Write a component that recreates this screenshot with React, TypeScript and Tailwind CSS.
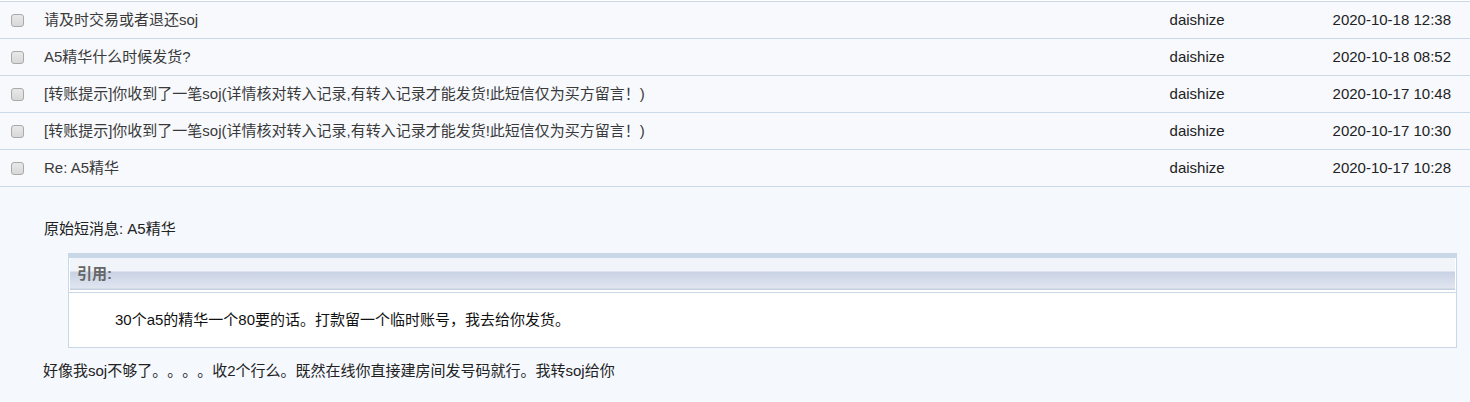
import React from "react"

interface Message {
  subject: string
  author: string
  time: string
}

const messages: Message[] = [
  { subject: "请及时交易或者退还soj", author: "daishize", time: "2020-10-18 12:38" },
  { subject: "A5精华什么时候发货?", author: "daishize", time: "2020-10-18 08:52" },
  {
    subject: "[转账提示]你收到了一笔soj(详情核对转入记录,有转入记录才能发货!此短信仅为买方留言！)",
    author: "daishize",
    time: "2020-10-17 10:48",
  },
  {
    subject: "[转账提示]你收到了一笔soj(详情核对转入记录,有转入记录才能发货!此短信仅为买方留言！)",
    author: "daishize",
    time: "2020-10-17 10:30",
  },
  { subject: "Re: A5精华", author: "daishize", time: "2020-10-17 10:28" },
]

function Checkbox() {
  return (
    <span className="block h-[13px] w-[13px] rounded-[3px] border border-[#a9a9a9] bg-[linear-gradient(#e8e8e8,#d8d8d8)]" />
  )
}

export default function App() {
  return (
    <div
      className="min-h-[402px] w-full bg-[#f5f8fd] text-[15px] text-[#222] [text-spacing-trim:space-all]"
      style={{ fontFamily: '"Liberation Sans", Arial, "Noto Sans CJK SC", sans-serif' }}
    >
      {/* Message list */}
      <div className="mt-px border-t border-[#cad9ea]">
        {messages.map((m, i) => (
          <div key={i} className="flex h-[37px] items-center border-b border-[#cad9ea] bg-[#f7f9fd]">
            <div className="w-[44px] pl-[11px]">
              <Checkbox />
            </div>
            <div className="flex-1 truncate text-[#3a3a3a]">{m.subject}</div>
            <div className="w-[163px]">{m.author}</div>
            <div className="pr-[19px] text-right">{m.time}</div>
          </div>
        ))}
      </div>

      {/* Opened message */}
      <div className="pl-[44px] pr-[13px] pt-[32px] pb-[20px] leading-[20px]">
        <div>原始短消息: A5精华</div>

        <div className="ml-6 mt-[14px] border border-t-[5px] border-[#c9d8e7] bg-white">
          <div className="mx-px flex h-[32px] items-center bg-[linear-gradient(#f1f4f9_0,#f1f4f9_13px,#c9d2e4_14px,#e0e5f0_30px,#c6cfe0_31px)] pl-[7px] font-bold text-[#666]">
            引用:
          </div>
          <div className="mt-[2px] border-t border-[#c9d8e7] py-[17px] pl-[46px] text-[#111]">
            30个a5的精华一个80要的话。打款留一个临时账号，我去给你发货。
          </div>
        </div>

        <div className="-ml-px mt-[13px]">好像我soj不够了。。。。收2个行么。既然在线你直接建房间发号码就行。我转soj给你</div>
      </div>
    </div>
  )
}
